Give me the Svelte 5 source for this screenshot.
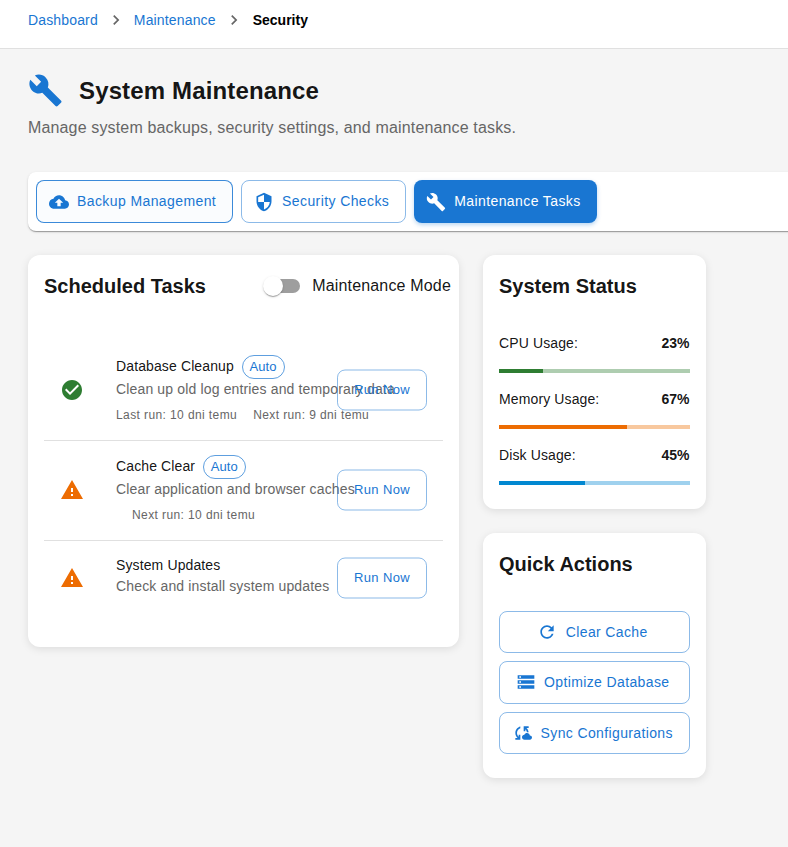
<script>
  const icons = {
    build: 'm22.7 19-9.1-9.1c.9-2.3.4-5-1.5-6.9-2-2-5-2.4-7.4-1.3L9 6 6 9 1.6 4.7C.4 7.1.9 10.1 2.9 12.1c1.9 1.9 4.6 2.4 6.9 1.5l9.1 9.1c.4.4 1 .4 1.4 0l2.3-2.3c.5-.4.5-1.1.1-1.4z',
    backup: 'M19.35 10.04C18.67 6.59 15.64 4 12 4 9.11 4 6.6 5.64 5.35 8.04 2.34 8.36 0 10.91 0 14c0 3.31 2.69 6 6 6h13c2.76 0 5-2.24 5-5 0-2.64-2.05-4.78-4.65-4.96zM14 13v4h-4v-4H7l5-5 5 5h-3z',
    security: 'M12 1 3 5v6c0 5.55 3.84 10.74 9 12 5.16-1.26 9-6.45 9-12V5l-9-4zm0 10.99h7c-.53 4.12-3.28 7.79-7 8.94V12H5V6.3l7-3.11v8.8z',
    chevron: 'M10 6 8.59 7.41 13.17 12l-4.58 4.59L10 18l6-6z',
    check: 'M12 2C6.48 2 2 6.48 2 12s4.48 10 10 10 10-4.48 10-10S17.52 2 12 2zm-2 15-5-5 1.41-1.41L10 14.17l7.59-7.59L19 8l-9 9z',
    warning: 'M1 21h22L12 2 1 21zm12-3h-2v-2h2v2zm0-4h-2v-4h2v4z',
    refresh: 'M17.65 6.35C16.2 4.9 14.21 4 12 4c-4.42 0-7.99 3.58-7.99 8s3.57 8 7.99 8c3.73 0 6.84-2.55 7.73-6h-2.08c-.82 2.33-3.04 4-5.65 4-3.31 0-6-2.69-6-6s2.69-6 6-6c1.66 0 3.14.69 4.22 1.78L13 11h7V4l-2.35 2.35z',
    storage: 'M2 20h20v-4H2v4zm2-3h2v2H4v-2zM2 4v4h20V4H2zm4 3H4V5h2v2zm-4 7h20v-4H2v4zm2-3h2v2H4v-2z',
    sync: 'M21.5 14.98c-.02 0-.03 0-.05.01C21.2 13.3 19.76 12 18 12c-1.4 0-2.6.83-3.16 2.02C13.26 14.1 12 15.4 12 17c0 1.66 1.34 3 3 3l6.5-.02c1.38 0 2.5-1.12 2.5-2.5s-1.12-2.5-2.5-2.5zM10 4.26v2.09C7.67 7.18 6 9.39 6 12c0 1.77.78 3.34 2 4.44V14h2v6H4v-2h2.73C5.06 16.54 4 14.4 4 12c0-3.73 2.55-6.85 6-7.74zM20 6h-2.73c1.43 1.26 2.41 3.01 2.66 5h-2.02c-.23-1.36-.93-2.55-1.91-3.44V10h-2V4h6v2z'
  };
  const tabs = [
    { label: 'Backup Management', icon: 'backup', state: 'hover' },
    { label: 'Security Checks', icon: 'security', state: '' },
    { label: 'Maintenance Tasks', icon: 'build', state: 'active' }
  ];
  const tasks = [
    { name: 'Database Cleanup', auto: true, ok: true, text: 'Clean up old log entries and temporary data', last: 'Last run: 10 dni temu', next: 'Next run: 9 dni temu' },
    { name: 'Cache Clear', auto: true, ok: false, text: 'Clear application and browser caches', last: '', next: 'Next run: 10 dni temu' },
    { name: 'System Updates', auto: false, ok: false, text: 'Check and install system updates' }
  ];
  const usage = [
    { label: 'CPU Usage:', value: 23, tone: 'green' },
    { label: 'Memory Usage:', value: 67, tone: 'orange' },
    { label: 'Disk Usage:', value: 45, tone: 'blue' }
  ];
  const actions = [
    { label: 'Clear Cache', icon: 'refresh' },
    { label: 'Optimize Database', icon: 'storage' },
    { label: 'Sync Configurations', icon: 'sync' }
  ];
</script>

{#snippet icon(name, size)}
  <svg viewBox="0 0 24 24" width={size} height={size} fill="currentColor" aria-hidden="true"><path d={icons[name]} /></svg>
{/snippet}

<div class="page">
  <nav class="crumbs">
    <a href="#dashboard">Dashboard</a>
    <span class="sep">{@render icon('chevron', 20)}</span>
    <a href="#maintenance">Maintenance</a>
    <span class="sep">{@render icon('chevron', 20)}</span>
    <b>Security</b>
  </nav>

  <main>
    <header>
      <h1>{@render icon('build', 35)}<span>System Maintenance</span></h1>
      <p>Manage system backups, security settings, and maintenance tasks.</p>
    </header>

    <div class="tabs">
      {#each tabs as t}
        <button class="btn tab {t.state}">{@render icon(t.icon, 20)}<span>{t.label}</span></button>
      {/each}
    </div>

    <div class="columns">
      <section class="card tasks">
        <div class="card-head">
          <h2>Scheduled Tasks</h2>
          <label class="mode">
            <span class="switch"><span class="thumb"></span></span>
            Maintenance Mode
          </label>
        </div>
        <ul>
          {#each tasks as t}
            <li>
              <span class="status" class:ok={t.ok}>{@render icon(t.ok ? 'check' : 'warning', 24)}</span>
              <div class="info">
                <div class="name"><span class="title">{t.name}</span>{#if t.auto}<span class="chip">Auto</span>{/if}</div>
                <div class="desc">{t.text}</div>
                {#if t.next}
                  <div class="runs"><span>{t.last}</span><span>{t.next}</span></div>
                {/if}
              </div>
              <button class="btn run"><span>Run Now</span></button>
            </li>
          {/each}
        </ul>
      </section>

      <div class="side">
        <section class="card">
          <h2>System Status</h2>
          <div class="meters">
            {#each usage as u}
              <div class="meter">
                <div class="line"><span>{u.label}</span><b>{u.value}%</b></div>
                <div class="bar {u.tone}"><div style="width: {u.value}%"></div></div>
              </div>
            {/each}
          </div>
        </section>
        <section class="card">
          <h2>Quick Actions</h2>
          <div class="actions">
            {#each actions as a}
              <button class="btn">{@render icon(a.icon, 20)}{a.label}</button>
            {/each}
          </div>
        </section>
      </div>
    </div>
  </main>
</div>

<style>
  :global(body) {
    background: #f5f5f5;
    overflow: hidden;
  }
  .page {
    box-sizing: border-box;
    min-height: 847px;
    background: #f5f5f5;
    color: rgba(0, 0, 0, 0.93);
    font-family: "Liberation Sans", Arial, sans-serif;
    overflow: hidden;
  }
  .page * { box-sizing: border-box; }
  svg { display: block; flex: none; }
  .crumbs {
    display: flex;
    align-items: center;
    height: 49px;
    padding: 0 28px 8px;
    background: #fff;
    border-bottom: 1px solid #e0e0e0;
    font-size: 14px;
    letter-spacing: 0.15px;
  }
  .crumbs a { color: #1976d2; text-decoration: none; }
  .crumbs b { margin-left: 1px; color: #000; letter-spacing: 0; }
  .sep { margin: 0 8px; color: #666; }
  main { padding: 24px 0 0 28px; }
  header { height: 99px; }
  h1 {
    display: flex;
    align-items: center;
    gap: 16px;
    height: 36px;
    margin: 0;
    font-size: 24px;
    font-weight: 700;
    letter-spacing: 0.14px;
  }
  h1 svg { margin-bottom: 1px; color: #1976d2; }
  header p {
    margin: 7px 0 0;
    color: #666;
    font-size: 16px;
    line-height: 24px;
    letter-spacing: 0.15px;
  }
  .btn {
    display: flex;
    align-items: center;
    justify-content: center;
    gap: 8px;
    margin: 0;
    padding: 0;
    border: 1px solid rgba(25, 118, 210, 0.5);
    border-radius: 8px;
    background: transparent;
    color: #1976d2;
    font: 14px "Liberation Sans", Arial, sans-serif;
    letter-spacing: 0.4px;
    white-space: nowrap;
  }
  .btn span { padding-bottom: 2px; }
  .tabs {
    display: flex;
    gap: 8px;
    width: 800px;
    height: 59px;
    padding: 8px;
    background: #fff;
    border-radius: 8px;
    box-shadow: 0 2px 1px -1px rgba(0, 0, 0, 0.2), 0 1px 1px rgba(0, 0, 0, 0.14), 0 1px 3px rgba(0, 0, 0, 0.12);
  }
  .tab { padding: 0 16px 0 12px; height: 43px; }
  .tab.hover { background: rgba(25, 118, 210, 0.02); border-color: rgba(25, 118, 210, 0.85); }
  .tab.active {
    border: 0;
    background: #1976d2;
    color: #fff;
    box-shadow: 0 2px 4px rgba(25, 118, 210, 0.3);
  }
  .columns {
    display: flex;
    align-items: flex-start;
    gap: 24px;
    margin-top: 24px;
  }
  .card {
    padding: 15px 16px 16px;
    background: #fff;
    border-radius: 12px;
    box-shadow: 0 2px 8px rgba(0, 0, 0, 0.1);
  }
  h2 {
    margin: 0;
    font-size: 20px;
    font-weight: 700;
    line-height: 32px;
    letter-spacing: 0;
    white-space: nowrap;
  }
  .tasks { width: 431px; height: 392px; padding-right: 8px; }
  .card-head { display: flex; justify-content: space-between; height: 70px; }
  .mode {
    display: flex;
    align-items: center;
    gap: 12px;
    height: 32px;
    font-size: 16px;
    letter-spacing: 0.17px;
  }
  .switch {
    display: flex;
    align-items: center;
    width: 34px;
    height: 14px;
    border-radius: 7px;
    background: #9e9e9e;
  }
  .thumb {
    flex: none;
    width: 20px;
    height: 20px;
    margin-left: -3px;
    border-radius: 50%;
    background: #fff;
    box-shadow: 0 2px 1px -1px rgba(0, 0, 0, 0.2), 0 1px 1px rgba(0, 0, 0, 0.14), 0 1px 3px rgba(0, 0, 0, 0.12);
  }
  ul { width: 399px; margin: 0; padding: 0; list-style: none; }
  li {
    position: relative;
    display: flex;
    align-items: center;
    height: 100px;
    padding: 0 16px 1px;
    border-bottom: 1px solid #e0e0e0;
  }
  li:first-child { height: 101px; padding-bottom: 0; }
  li:last-child { height: 74px; padding-bottom: 0; border-bottom: 0; }
  .status { width: 56px; color: #ed6c02; }
  .status.ok { color: #2e7d32; }
  .info { white-space: nowrap; }
  li:last-child .info { padding-bottom: 6px; }
  li:last-child .desc { line-height: 18px; }
  .name {
    display: flex;
    align-items: center;
    gap: 8px;
    font-size: 14px;
    line-height: 21px;
    letter-spacing: 0.12px;
  }
  .title { padding-bottom: 1px; }
  .chip {
    height: 24px;
    padding: 0 7px 0 6.5px;
    border: 1px solid rgba(25, 118, 210, 0.7);
    border-radius: 12px;
    color: #1976d2;
    font-size: 13px;
    line-height: 22px;
    letter-spacing: 0.12px;
  }
  .desc { color: #666; font-size: 14px; line-height: 20px; letter-spacing: 0.15px; }
  .runs {
    display: flex;
    gap: 16px;
    margin-top: 6px;
    color: #666;
    font-size: 12px;
    line-height: 20px;
    letter-spacing: 0.4px;
  }
  .run {
    position: absolute;
    right: 16px;
    top: 50%;
    width: 90px;
    height: 41px;
    font-size: 13px;
    letter-spacing: 0.36px;
    transform: translateY(-50%);
  }
  li:nth-child(2) .run { top: 49%; }
  .side { display: flex; flex-direction: column; gap: 24px; width: 223px; }
  .side .card:first-child { height: 254px; }
  .side .card:last-child { height: 245px; }
  .meters { margin-top: 31px; }
  .meter { height: 56px; }
  .line {
    display: flex;
    justify-content: space-between;
    height: 36px;
    padding-right: 0.5px;
    font-size: 14px;
    line-height: 20px;
    letter-spacing: 0.12px;
  }
  .line b { letter-spacing: 0; }
  .bar { height: 4px; }
  .bar div { height: 100%; }
  .green { background: #aecdb0; }
  .green div { background: #2e7d32; }
  .orange { background: #f8c89e; }
  .orange div { background: #ed6c02; }
  .blue { background: #9fd1ee; }
  .blue div { background: #0288d1; }
  .actions { display: flex; flex-direction: column; gap: 8px; margin-top: 31px; }
  .actions .btn { height: 42.25px; padding-right: 4px; gap: 8.5px; letter-spacing: 0.37px; }
</style>
